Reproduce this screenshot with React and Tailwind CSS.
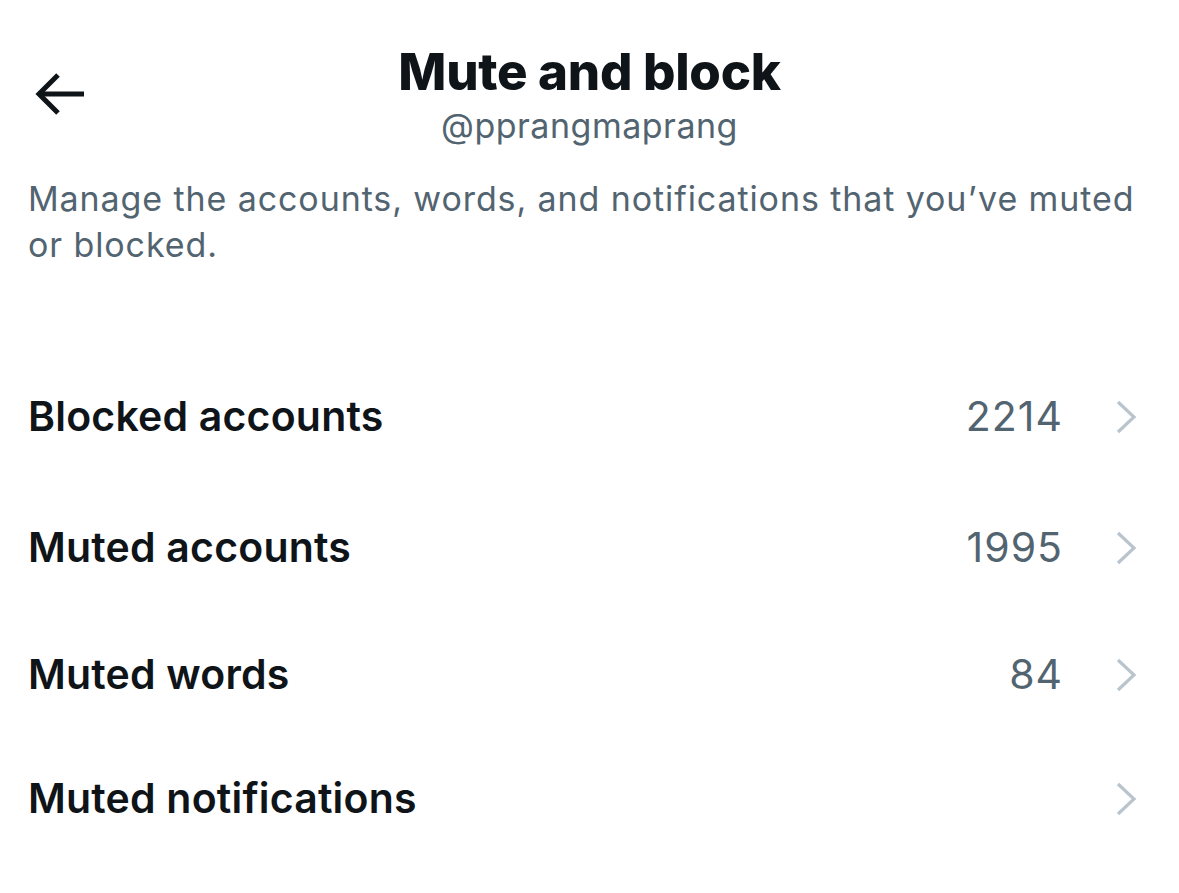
import React from 'react'

const rows = [
    { label: 'Blocked accounts', count: '2214', h: 'h-[135px]' },
    { label: 'Muted accounts', count: '1995', h: 'h-[128px]' },
    { label: 'Muted words', count: '84', h: 'h-[125px]' },
    { label: 'Muted notifications', count: '', h: 'h-[124px]' },
]

const BackArrow = () => (
    <svg width="52" height="46" viewBox="0 0 52 46" fill="none" stroke="#0f1419" strokeWidth="5" strokeLinecap="butt" strokeLinejoin="miter">
        <path d="M49 23H5" />
        <path d="M23 4L4 23l19 19" />
    </svg>
)

const Chevron = () => (
    <svg width="24" height="34" viewBox="0 0 24 34" fill="none" stroke="#b9c4cd" strokeWidth="3.2">
        <path d="M3 2l16 15L3 32" />
    </svg>
)

const App = () => {
    return (
        <div className="w-[1179px] h-[893px] bg-white overflow-hidden text-[#0f1419]" style={{ fontFamily: 'Inter, "Noto Sans", sans-serif' }}>
            {/* header */}
            <div className="relative h-[170px] flex flex-col items-center pt-[40px]">
                <button className="absolute left-[35px] top-[71px]">
                    <BackArrow />
                </button>
                <div className="text-[51px] font-extrabold leading-[64px] tracking-[-0.3px]">Mute and block</div>
                <div className="text-[34px] text-[#536471] leading-[40px] tracking-[0.5px] mt-[2px]">@pprangmaprang</div>
            </div>

            <p className="px-[28px] text-[34px] leading-[46px] tracking-[0.9px] text-[#536471] mt-[6px]">
                Manage the accounts, words, and notifications that you’ve muted or blocked.
            </p>

            <div className="mt-[81px]">
                {rows.map((r) => (
                    <div key={r.label} className={`${r.h} flex items-center pl-[28px] pr-[40px]`}>
                        <span className="text-[41px] font-semibold tracking-[0.2px] flex-1">{r.label}</span>
                        <span className="text-[41px] text-[#536471] tracking-[1px] mr-[52px]">{r.count}</span>
                        <Chevron />
                    </div>
                ))}
            </div>
        </div>
    )
}

export default App
